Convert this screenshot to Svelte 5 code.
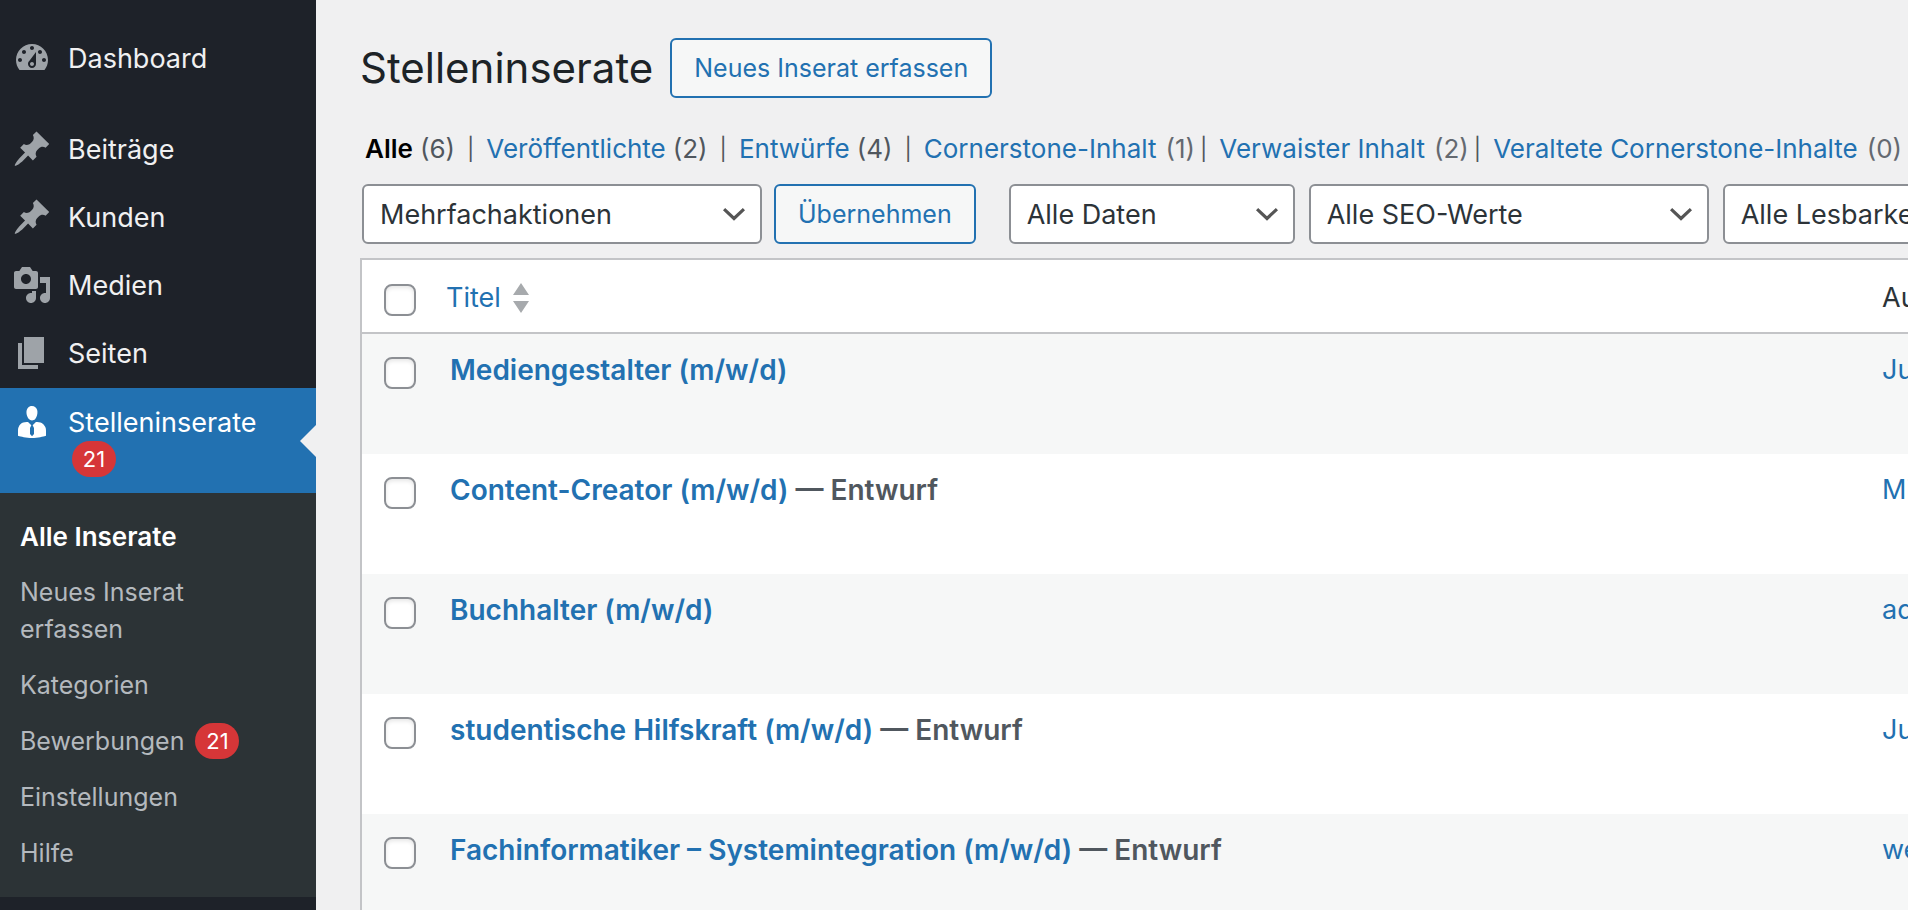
<script lang="ts">
  interface MenuItem {
    label: string;
    icon: string;
  }

  interface Job {
    title: string;
    draft: boolean;
    author: string;
  }

  const icons = {
    dashboard: 'M3.76 16h12.48c1.1-1.37 1.76-3.11 1.76-5 0-4.42-3.58-8-8-8s-8 3.58-8 8c0 1.89.66 3.63 1.76 5zM10 4c.55 0 1 .45 1 1s-.45 1-1 1-1-.45-1-1 .45-1 1-1zM6 6c.55 0 1 .45 1 1s-.45 1-1 1-1-.45-1-1 .45-1 1-1zm8 0c.55 0 1 .45 1 1s-.45 1-1 1-1-.45-1-1 .45-1 1-1zm-5.37 5.55L12 7v6c0 1.1-.9 2-2 2s-2-.9-2-2c0-.57.24-1.08.63-1.45zM4 10c.55 0 1 .45 1 1s-.45 1-1 1-1-.45-1-1 .45-1 1-1zm12 0c.55 0 1 .45 1 1s-.45 1-1 1-1-.45-1-1 .45-1 1-1zm-5 3c0-.55-.45-1-1-1s-1 .45-1 1 .45 1 1 1 1-.45 1-1z',
    pin: 'M10.44 3.02l1.82-1.82 6.36 6.35-1.83 1.82c-1.05-.68-2.48-.57-3.41.36l-.75.75c-.92.93-1.04 2.35-.35 3.41l-1.83 1.82-2.41-2.41-2.8 2.79c-.42.42-3.38 2.71-3.8 2.29s1.86-3.39 2.28-3.81l2.79-2.79L4.1 9.36l1.83-1.82c1.05.69 2.48.57 3.4-.36l.75-.75c.93-.92 1.05-2.35.36-3.41z',
    media: 'M13 11V4c0-.55-.45-1-1-1h-1.67L9 1H5L3.67 3H2c-.55 0-1 .45-1 1v7c0 .55.45 1 1 1h10c.55 0 1-.45 1-1zM7 4.5c1.38 0 2.5 1.12 2.5 2.5S8.38 9.5 7 9.5 4.5 8.38 4.5 7 5.62 4.5 7 4.5zM14 6h5v10.5c0 1.38-1.12 2.5-2.5 2.5S14 17.88 14 16.5s1.12-2.5 2.5-2.5c.17 0 .34.02.5.05V9h-3V6zm-4 8.05V13h2v3.5c0 1.38-1.12 2.5-2.5 2.5S7 17.88 7 16.5 8.12 14 9.5 14c.17 0 .34.02.5.05z',
    page: 'M6 15V2h10v13H6zm-1 1h8v2H3V5h2v11z',
    businessman: 'M7.3 6l-.03-.19c-.04-.37-.05-.73-.03-1.08.02-.36.1-.71.25-1.04.14-.32.31-.61.52-.86s.49-.46.83-.6c.34-.15.72-.23 1.13-.23.69 0 1.26.2 1.71.59s.76.87.91 1.44.18 1.16.09 1.78l-.03.19c-.01.09-.05.25-.11.48-.05.24-.12.47-.2.69-.08.21-.19.45-.34.72-.14.27-.3.49-.47.69-.18.19-.4.34-.67.48-.27.13-.55.19-.86.19s-.59-.06-.87-.19c-.26-.13-.49-.29-.67-.5-.18-.2-.34-.42-.49-.66-.15-.25-.26-.49-.34-.73-.09-.25-.16-.47-.21-.67-.06-.21-.1-.37-.12-.5zm9.2 6.24c.41.7.5 1.41.5 2.14v2.49c0 .03-.12.08-.29.13-.18.04-.42.13-.97.27-.55.12-1.1.24-1.65.34s-1.19.19-1.95.27c-.75.08-1.46.12-2.13.12-.68 0-1.39-.04-2.14-.12-.75-.07-1.4-.17-1.98-.27-.58-.11-1.08-.23-1.56-.34-.49-.11-.8-.21-1.06-.29L3 16.87v-2.49c0-.75.07-1.46.46-2.15s.81-1.25 1.5-1.68C5.66 10.12 7.19 10 8 10l1.67 1.67L9 13v3l1.02 1.08L11 16v-3l-.68-1.33L11.97 10c.77 0 2.2.07 2.9.52.71.45 1.21 1.02 1.63 1.72z',
  };

  const menu: MenuItem[] = [
    { label: 'Beiträge', icon: icons.pin },
    { label: 'Kunden', icon: icons.pin },
    { label: 'Medien', icon: icons.media },
    { label: 'Seiten', icon: icons.page },
  ];

  const submenu = [
    { label: 'Alle Inserate', current: true },
    { label: 'Neues Inserat erfassen' },
    { label: 'Kategorien' },
    { label: 'Bewerbungen', count: 21 },
    { label: 'Einstellungen' },
    { label: 'Hilfe' },
  ];

  const views = [
    { label: 'Alle', count: 6, current: true },
    { label: 'Veröffentlichte', count: 2 },
    { label: 'Entwürfe', count: 4 },
    { label: 'Cornerstone-Inhalt', count: 1, seo: true },
    { label: 'Verwaister Inhalt', count: 2, seo: true },
    { label: 'Veraltete Cornerstone-Inhalte', count: 0, seo: true },
  ];

  const jobs: Job[] = [
    { title: 'Mediengestalter (m/w/d)', draft: false, author: 'Ju' },
    { title: 'Content-Creator (m/w/d)', draft: true, author: 'Mi' },
    { title: 'Buchhalter (m/w/d)', draft: false, author: 'ad' },
    { title: 'studentische Hilfskraft (m/w/d)', draft: true, author: 'Ju' },
    { title: 'Fachinformatiker – Systemintegration (m/w/d)', draft: true, author: 'we' },
  ];

  let selected = $state(jobs.map(() => false));
  let allSelected = $derived(selected.every(Boolean));

  function toggleAll() {
    const next = !allSelected;
    selected = jobs.map(() => next);
  }
</script>

{#snippet menuIcon(path: string)}
  <svg class="menu-icon" viewBox="0 0 20 20" fill="currentColor" aria-hidden="true">
    <path d={path}></path>
  </svg>
{/snippet}

<div class="admin">
  <nav class="sidebar" aria-label="Hauptmenü">
    <a class="menu-item first" href="#dashboard">
      {@render menuIcon(icons.dashboard)}
      <span class="menu-label">Dashboard</span>
    </a>

    {#each menu as item}
      <a class="menu-item" href="#{item.label}">
        {@render menuIcon(item.icon)}
        <span class="menu-label">{item.label}</span>
      </a>
    {/each}

    <a class="menu-item active" href="#stelleninserate">
      {@render menuIcon(icons.businessman)}
      <span class="menu-label">Stelleninserate <span class="badge">21</span></span>
    </a>

    <ul class="submenu">
      {#each submenu as item}
        <li>
          <a class="submenu-link" class:current={item.current} href="#{item.label}">
            {item.label}
            {#if item.count}<span class="badge">{item.count}</span>{/if}
          </a>
        </li>
      {/each}
    </ul>
  </nav>

  <main class="content">
    <header class="page-head">
      <h1>Stelleninserate</h1>
      <button class="btn">Neues Inserat erfassen</button>
    </header>

    <ul class="views">
      {#each views as view, i}
        <li class:seo={view.seo}>
          <a class:current={view.current} href="#{view.label}">{view.label}</a>
          <span class="count">({view.count})</span>
          {#if i < views.length - 1}<span class="divider">|</span>{/if}
        </li>
      {/each}
    </ul>

    <div class="tablenav">
      <select class="wide" aria-label="Mehrfachaktion wählen">
        <option>Mehrfachaktionen</option>
      </select>
      <button class="btn apply">Übernehmen</button>
      <select class="dates" aria-label="Nach Datum filtern">
        <option>Alle Daten</option>
      </select>
      <select class="wide filter" aria-label="Nach SEO-Wert filtern">
        <option>Alle SEO-Werte</option>
      </select>
      <select class="wide filter" aria-label="Nach Lesbarkeit filtern">
        <option>Alle Lesbarkeitswerte</option>
      </select>
    </div>

    <table>
      <thead>
        <tr>
          <th class="check" scope="col">
            <input type="checkbox" aria-label="Alle auswählen" checked={allSelected} onchange={toggleAll} />
          </th>
          <th class="title" scope="col">
            <a class="sort" href="#titel">
              Titel
              <svg viewBox="0 0 16 30" fill="#a7aaad" aria-hidden="true">
                <path d="M8 0l8 12H0zM0 18h16L8 30z"></path>
              </svg>
            </a>
          </th>
          <th class="author" scope="col">Autor</th>
        </tr>
      </thead>
      <tbody>
        {#each jobs as job, i}
          <tr>
            <td class="check">
              <input type="checkbox" aria-label="{job.title} auswählen" bind:checked={selected[i]} />
            </td>
            <td class="title">
              <strong><a href="#job-{i}">{job.title}</a>{#if job.draft}{' — Entwurf'}{/if}</strong>
            </td>
            <td class="author"><a href="#{job.author}">{job.author}</a></td>
          </tr>
        {/each}
      </tbody>
    </table>
  </main>
</div>

<style>
  :global(body) {
    background: #f0f0f1;
    overflow: hidden;
  }

  .admin {
    display: flex;
    height: 100vh;
    overflow: hidden;
    font-family: Inter, "Liberation Sans", sans-serif;
    font-size: 26px;
    color: #2c3338;
  }

  a {
    color: #2271b1;
    text-decoration: none;
  }

  /* Sidebar */
  .sidebar {
    flex: none;
    box-sizing: border-box;
    width: 316px;
    padding-top: 24px;
    background: #1e2229;
  }

  .menu-item {
    position: relative;
    display: flex;
    align-items: flex-start;
    gap: 16px;
    padding: 0 40px 0 12px;
    color: #f0f0f1;
    font-size: 27px;
    line-height: 37px;
  }

  .menu-item.first {
    margin-bottom: 23px;
  }

  .menu-icon {
    flex: none;
    width: 40px;
    height: 40px;
    margin-top: 14px;
    color: #9ea3a8;
  }

  .menu-label {
    padding: 16px 0 15px;
  }

  .menu-item.active {
    margin-top: 1px;
    background: #2271b1;
    color: #fff;
  }

  .menu-item.active .menu-icon {
    color: #fff;
  }

  .menu-item.active::after {
    content: '';
    position: absolute;
    top: 50%;
    right: 0;
    margin-top: -16px;
    border: 16px solid transparent;
    border-left: 0;
    border-right-color: #f0f0f1;
  }

  .badge {
    display: inline-block;
    box-sizing: border-box;
    min-width: 44px;
    height: 36px;
    margin-left: 4px;
    padding: 0 10px;
    border-radius: 18px;
    background: #d63638;
    color: #fff;
    font-size: 22px;
    line-height: 36px;
    text-align: center;
    vertical-align: top;
  }

  .submenu {
    margin: 0;
    padding: 15px 0 16px;
    list-style: none;
    background: #2c3336;
  }

  .submenu-link {
    display: block;
    padding: 10px 100px 9px 20px;
    color: #b4b9be;
    font-size: 25px;
    line-height: 37px;
  }

  .submenu li:has(.badge) .submenu-link {
    padding-right: 20px;
  }

  .submenu-link.current {
    color: #fff;
    font-size: 26px;
    font-weight: 600;
  }

  /* Content */
  .content {
    flex: 1;
    min-width: 0;
    padding: 38px 0 0 44px;
    overflow: hidden;
  }

  .page-head {
    display: flex;
    align-items: center;
    gap: 17px;
  }

  h1 {
    margin: 0;
    color: #1d2327;
    font-size: 42px;
    font-weight: 400;
    line-height: 60px;
  }

  .btn {
    height: 60px;
    padding: 0 22px;
    border: 2px solid #2271b1;
    border-radius: 6px;
    background: #f6f7f7;
    color: #2271b1;
    font: inherit;
    font-size: 25px;
    white-space: nowrap;
    cursor: pointer;
  }

  .views {
    display: flex;
    margin: 32px 0 16px;
    padding: 0 0 0 5px;
    list-style: none;
    line-height: 38px;
    white-space: nowrap;
  }

  .views li {
    display: flex;
    gap: 7px;
  }

  .views .current {
    color: #000;
    font-weight: 600;
  }

  .count,
  .divider {
    color: #50575e;
  }

  .divider {
    margin: 0 12px 0 5px;
    font-size: 22px;
  }

  .views .seo {
    gap: 9px;
  }

  .seo .count {
    color: #646970;
  }

  .seo .divider {
    margin-left: -4px;
  }

  .tablenav {
    display: flex;
    padding-left: 2px;
    margin-bottom: 14px;
  }

  select {
    flex: none;
    box-sizing: border-box;
    height: 60px;
    padding: 0 48px 0 16px;
    border: 2px solid #8c8f94;
    border-radius: 6px;
    appearance: none;
    background: #fff url("data:image/svg+xml,%3Csvg xmlns='http://www.w3.org/2000/svg' viewBox='0 0 20 20'%3E%3Cpath d='M3.8 7l6.2 5.8L16.2 7' fill='none' stroke='%23555' stroke-width='2'/%3E%3C/svg%3E") no-repeat right 10px center / 32px 32px;
    color: #2c3338;
    font-family: inherit;
    font-size: 27px;
  }

  .wide {
    width: 400px;
  }

  .dates {
    width: 286px;
    margin-left: 33px;
  }

  .filter {
    margin-left: 14px;
  }

  .apply {
    margin-left: 12px;
  }

  /* The list is wider than its column, so the last columns run off to the right. */
  table {
    width: calc(100% + 180px);
    border: 2px solid #c3c4c7;
    border-spacing: 0;
    background: #fff;
    table-layout: fixed;
  }

  th,
  td {
    box-sizing: border-box;
    padding: 0;
    font-size: 27px;
    font-weight: 400;
    line-height: 38px;
    text-align: left;
    vertical-align: top;
  }

  th {
    height: 74px;
    padding-top: 19px;
    border-bottom: 2px solid #c3c4c7;
  }

  td {
    height: 120px;
    padding-top: 17px;
  }

  tbody tr:nth-child(odd) {
    background: #f6f7f7;
  }

  .check {
    width: 84px;
    padding-left: 22px;
    line-height: 0;
  }

  th.check {
    padding-top: 24px;
  }

  td.check {
    padding-top: 23px;
  }

  .author {
    width: 204px;
  }

  td.title {
    padding-left: 4px;
  }

  strong {
    color: #50575e;
    font-size: 28px;
    font-weight: 600;
  }

  .sort {
    display: flex;
    align-items: center;
    gap: 12px;
  }

  .sort svg {
    width: 16px;
    height: 30px;
  }

  input[type='checkbox'] {
    box-sizing: border-box;
    width: 32px;
    height: 32px;
    margin: 0;
    border: 2px solid #8c8f94;
    border-radius: 8px;
    appearance: none;
    background: #fff;
    box-shadow: inset 0 2px 4px rgba(0, 0, 0, 0.1);
  }

  input[type='checkbox']:checked {
    background: #2271b1;
  }
</style>
